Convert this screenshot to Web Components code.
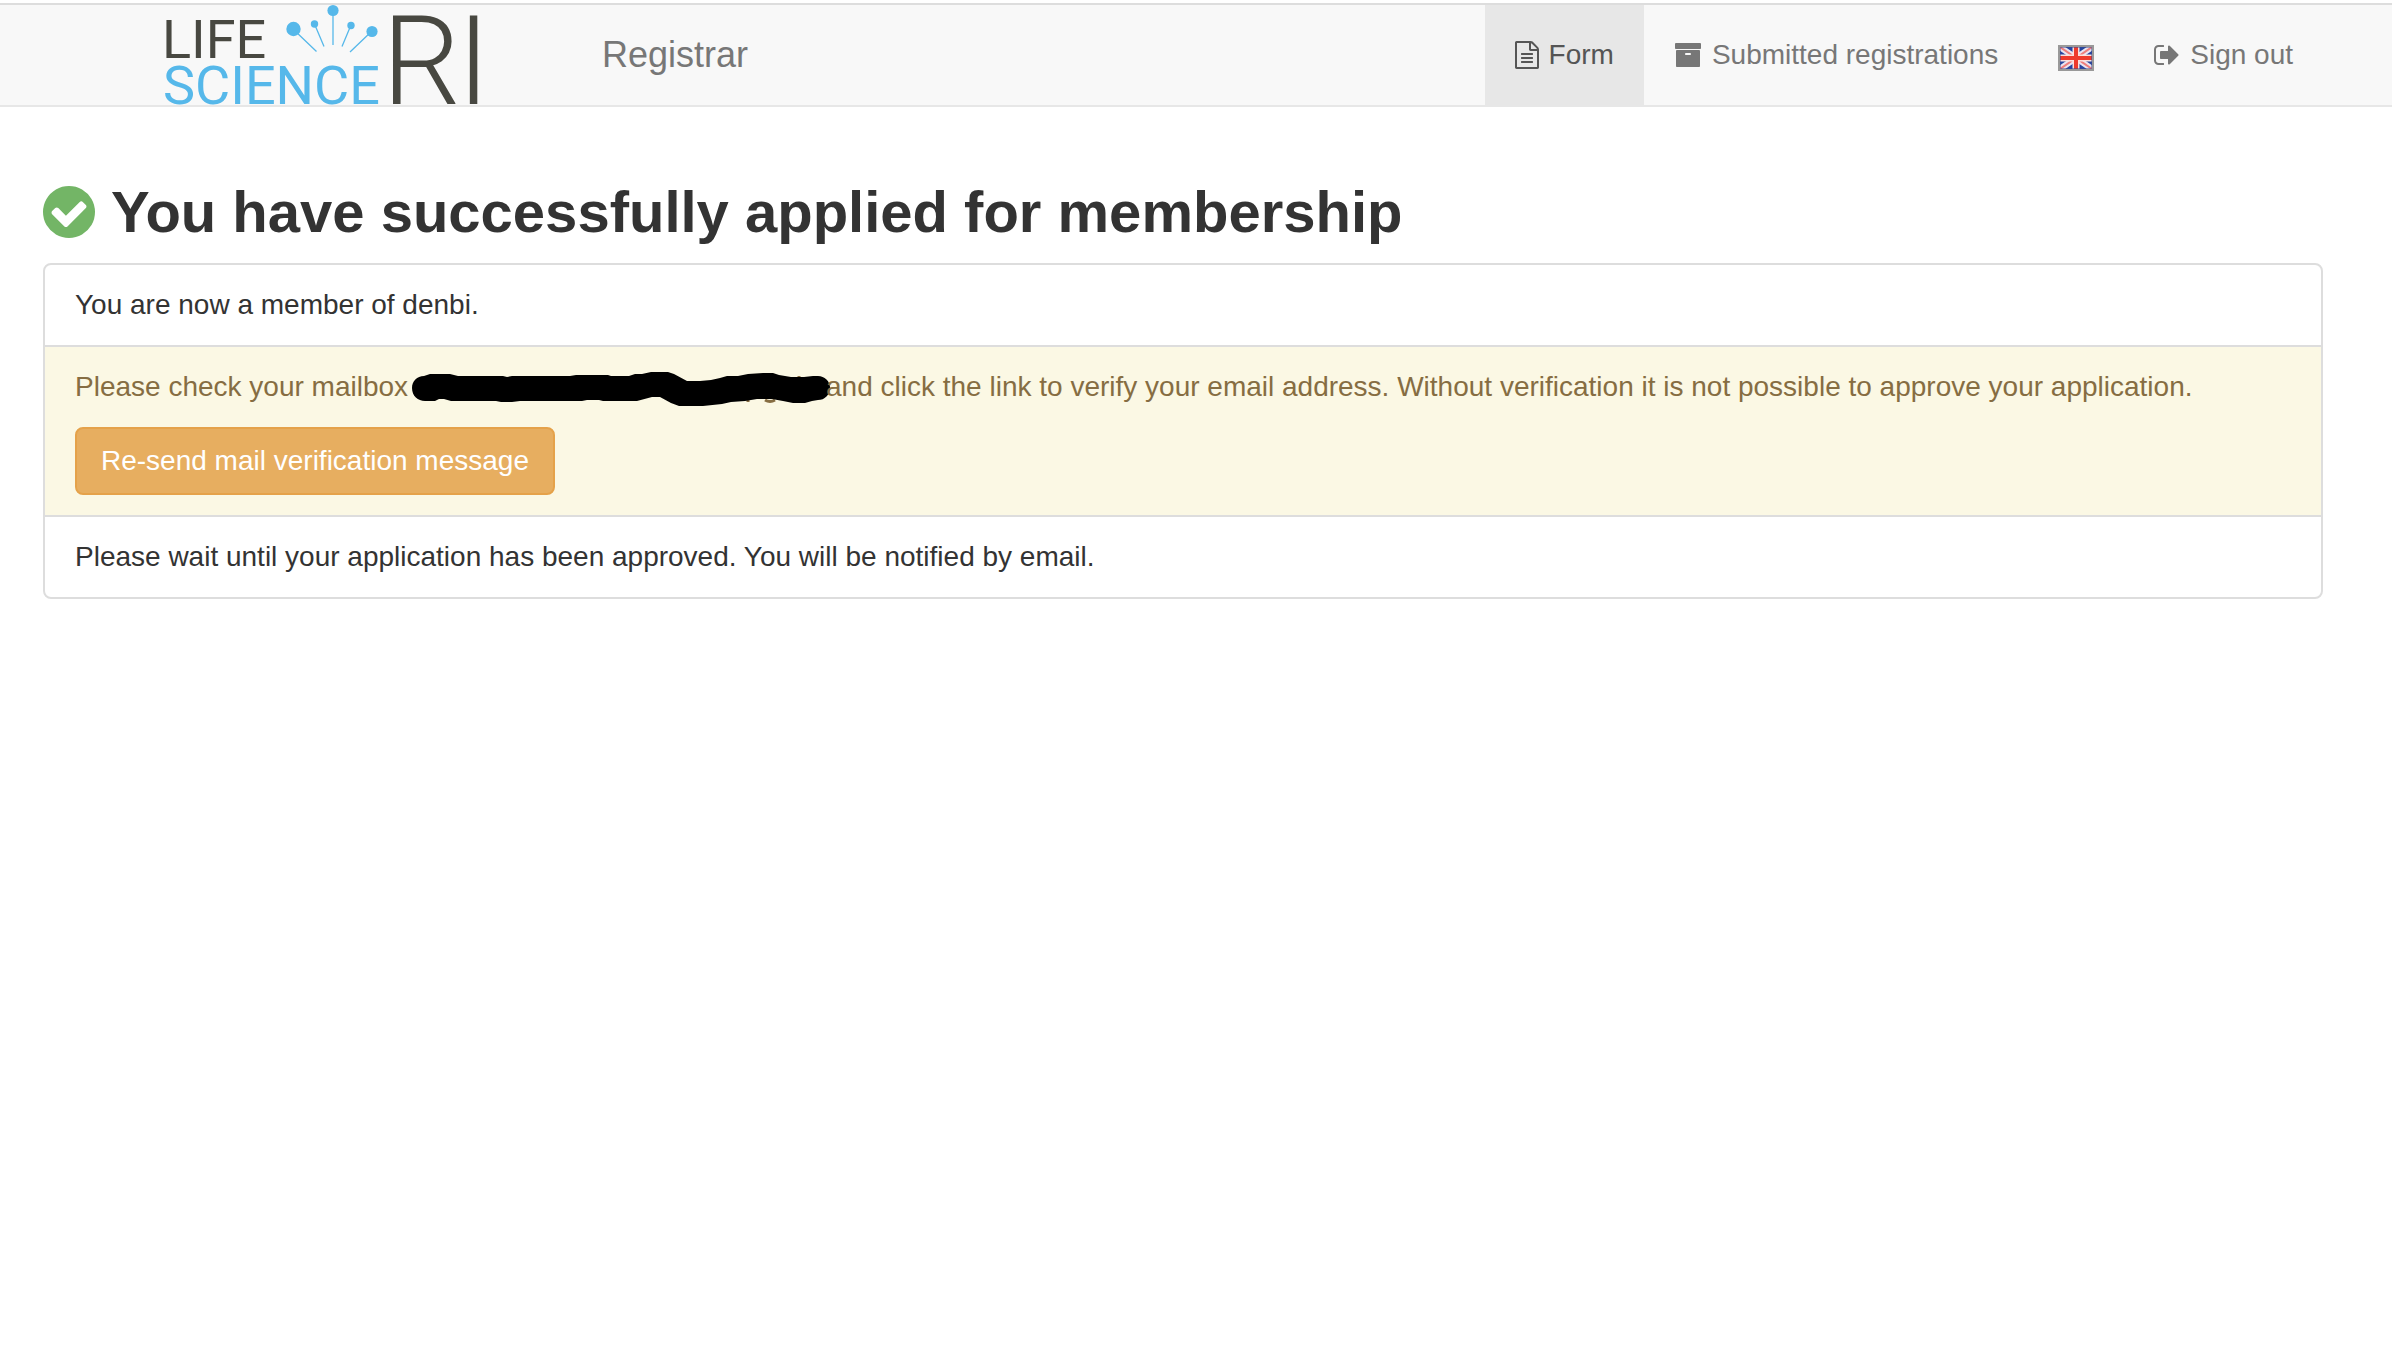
<!DOCTYPE html>
<html lang="en">
<head>
<meta charset="utf-8">
<title>Registrar</title>
<style>
body { margin: 0; background: #fff; color: #333; font: 28px/40px "Liberation Sans", Arial, sans-serif; }
</style>
</head>
<body>
<registrar-app></registrar-app>
<script>
const define = (name, html) => customElements.define(name, class extends HTMLElement {
  constructor() {
    super();
    const t = document.createElement('template');
    t.innerHTML = html;
    this.attachShadow({ mode: 'open' }).append(t.content.cloneNode(true));
  }
});

const ICONS = {
  file: ['128 0 1536 1792', 24, 28, 'M1596 380q28 28 48 76t20 88v1152q0 40-28 68t-68 28h-1344q-40 0-68-28t-28-68v-1600q0-40 28-68t68-28h896q40 0 88 20t76 48zm-444-244v376h376q-10-29-22-41l-313-313q-12-12-41-22zm384 1528v-1024h-416q-40 0-68-28t-28-68v-416h-768v1536h1280zm-1024-864q0-14 9-23t23-9h704q14 0 23 9t9 23v64q0 14-9 23t-23 9h-704q-14 0-23-9t-9-23v-64zm736 224q14 0 23 9t9 23v64q0 14-9 23t-23 9h-704q-14 0-23-9t-9-23v-64q0-14 9-23t23-9h704zm0 256q14 0 23 9t9 23v64q0 14-9 23t-23 9h-704q-14 0-23-9t-9-23v-64q0-14 9-23t23-9h704z'],
  archive: ['0 0 1792 1792', 28, 28, 'M1088 832q0-26-19-45t-45-19h-256q-26 0-45 19t-19 45 19 45 45 19h256q26 0 45-19t19-45zm576-192v960q0 26-19 45t-45 19h-1408q-26 0-45-19t-19-45v-960q0-26 19-45t45-19h1408q26 0 45 19t19 45zm64-448v256q0 26-19 45t-45 19h-1536q-26 0-45-19t-19-45v-256q0-26 19-45t45-19h1536q26 0 45 19t19 45z'],
  signout: ['64 0 1664 1792', 26, 28, 'M704 1440q0 4 1 20t.5 26.5-3 23.5-10 19.5-20.5 6.5h-320q-119 0-203.5-84.5t-84.5-203.5v-704q0-119 84.5-203.5t203.5-84.5h320q13 0 22.5 9.5t9.5 22.5q0 4 1 20t.5 26.5-3 23.5-10 19.5-20.5 6.5h-320q-66 0-113 47t-47 113v704q0 66 47 113t113 47h312l11.5 1 11.5 3 8 5.5 7 9 2 13.5zm928-544q0 26-19 45l-544 544q-19 19-45 19t-45-19-19-45v-288h-448q-26 0-45-19t-19-45v-384q0-26 19-45t45-19h448v-288q0-26 19-45t45-19 45 19l544 544q19 19 19 45z'],
  check: ['128 128 1536 1536', 52, 52, 'M1412 734q0-28-18-46l-91-90q-19-19-45-19t-45 19l-408 407-226-226q-19-19-45-19t-45 19l-91 90q-18 18-18 46 0 27 18 45l362 362q19 19 45 19 27 0 46-19l543-543q18-18 18-45zm252 162q0 209-103 385.5t-279.5 279.5-385.5 103-385.5-103-279.5-279.5-103-385.5 103-385.5 279.5-279.5 385.5-103 385.5 103 279.5 279.5 103 385.5z']
};

customElements.define('app-icon', class extends HTMLElement {
  constructor() { super(); this.attachShadow({ mode: 'open' }); }
  connectedCallback() {
    const [box, w, h, d] = ICONS[this.getAttribute('name')];
    this.shadowRoot.innerHTML = `<style>:host{display:block;flex:none}svg{display:block}</style>
      <svg viewBox="${box}" width="${w}" height="${h}" fill="currentColor" aria-hidden="true"><path d="${d}"/></svg>`;
  }
});

define('flag-icon', `<style>:host{display:block;margin-top:6px}svg{display:block}</style>
<svg width="36" height="26" viewBox="0 0 36 26" role="img" aria-label="English">
  <rect width="36" height="26" fill="#999"/>
  <svg x="2" y="2" width="32" height="22" viewBox="0 0 32 22">
    <rect width="32" height="22" fill="#2545a0"/>
    <path d="M0 0L32 22M32 0L0 22" stroke="#e9e4f0" stroke-width="6"/>
    <path d="M0 0L32 22M32 0L0 22" stroke="#ee7d7b" stroke-width="2"/>
    <path d="M16 0V22M0 11H32" stroke="#fbe0dc" stroke-width="7"/>
    <path d="M16 0V22M0 11H32" stroke="#ee3a2c" stroke-width="4"/>
    <rect width="32" height="22" fill="none" stroke="#3a4a90" stroke-opacity=".5" stroke-width="2"/>
  </svg>
</svg>`);

define('brand-logo', `<style>:host{display:block;flex:none}svg{display:block;overflow:visible;font-family:Roboto,"Liberation Sans",sans-serif}</style>
<svg width="320" height="100" viewBox="164 5 320 100" role="img" aria-label="Life Science RI">
  <g fill="#484841">
    <text x="162" y="58" font-size="54">LIFE</text>
    <text y="104" font-size="124" font-weight="300"><tspan x="382">R</tspan><tspan x="457">I</tspan></text>
  </g>
  <text x="163" y="104" font-size="54" fill="#56b8ea">SCIENCE</text>
  <g fill="#56b8ea" stroke="none">
    <circle cx="293.500" cy="29" r="7.200"/><circle cx="314.500" cy="24" r="3.700"/><circle cx="333" cy="10.500" r="5.600"/><circle cx="351" cy="25.500" r="3.700"/><circle cx="372" cy="31.500" r="5.600"/>
  </g>
  <path d="M294 30L316.500 51.500M314.500 24L324 46.500M333 10V45M351 25L342 46.500M372 31L350 52" stroke="#56b8ea" stroke-width="1.300" fill="none"/>
</svg>`);

define('nav-item', `<style>
:host{display:block}
a{display:flex;align-items:center;gap:10px;height:40px;padding:30px;color:#777;text-decoration:none;white-space:nowrap}
:host([active]) a{background:#e7e7e7;color:#555}
</style><a href="#"><slot name="icon"></slot><slot></slot></a>`);

define('nav-bar', `<style>
:host{display:block;margin-top:3px;border-top:2px solid #ddd;border-bottom:2px solid #e7e7e7;background:#f8f8f8}
header,nav{display:flex}
header{padding:0 69px 0 164px}
.logo{display:block}
.title{margin-left:118px;padding:30px 0;color:#777;font-size:36px;text-decoration:none}
nav{margin-left:auto}
</style>
<header>
  <a class="logo" href="#" aria-label="Home"><brand-logo></brand-logo></a>
  <a class="title" href="#">Registrar</a>
  <nav>
    <nav-item active><app-icon slot="icon" name="file"></app-icon>Form</nav-item>
    <nav-item><app-icon slot="icon" name="archive"></app-icon>Submitted registrations</nav-item>
    <nav-item><flag-icon slot="icon"></flag-icon></nav-item>
    <nav-item><app-icon slot="icon" name="signout"></app-icon>Sign out</nav-item>
  </nav>
</header>`);

define('page-title', `<style>
:host{display:block}
h2{display:flex;align-items:center;gap:16px;margin:0 0 18px;font-size:58px;line-height:66px;font-weight:700}
app-icon{color:#73b566}
</style><h2><app-icon name="check"></app-icon><span><slot></slot></span></h2>`);

define('list-group', `<style>:host{display:block;border:2px solid #ddd;border-radius:8px;overflow:hidden}</style><slot></slot>`);
define('list-item', `<style>
:host{display:block;padding:20px 30px;border-top:2px solid #ddd}
:host(:first-child){border-top:0}
:host([warning]){background:#fbf8e4;color:#866d42}
</style><slot></slot>`);

define('redacted-text', `<style>:host{display:inline-block;vertical-align:top;margin:0 -4px 0 4px}svg{display:block}</style>
<svg width="418" height="40" viewBox="412 367 418 40" aria-hidden="true">
  <path d="M748 397v5M765 400q5 3 10 0M799 379v-3" stroke="#866d42" stroke-width="3" fill="none"/>
  <path d="M412 388C412 381 417 376 424 376L430 374H450L458 376H503L507 377L512 376H570L576 375H608L611 376H629L635 374L642 374L651 372H668L674 374L687 381H700L711 380L720 378L727 376H738L748 374L763 373H773L779 375L791 377H804L813 376H818A12 12 0 0 1 818 400L812 401L805 403H793L783 401L772 399H757L745 401L731 402L722 404L703 406H679L671 403L660 397H652L637 401H603L599 400H587L582 401H520L512 402H501L496 401H451L444 399H439L435 401H425C418 401 412 396 412 388Z"/>
</svg>`);

define('warning-button', `<style>
:host{display:block;margin-top:20px}
button{display:block;padding:12px 24px;border:2px solid #e5a24a;border-radius:8px;background:#e7ae60;color:#fff;font:inherit}
</style><button type="button"><slot></slot></button>`);

define('registrar-app', `<style>
:host{display:block}
main{padding:72px 69px 0 43px}
</style>
<nav-bar></nav-bar>
<main>
  <page-title>You have successfully applied for membership</page-title>
  <list-group>
    <list-item>You are now a member of denbi.</list-item>
    <list-item warning>Please check your mailbox<redacted-text></redacted-text>and click the link to verify your email address. Without verification it is not possible to approve your application.<warning-button>Re-send mail verification message</warning-button></list-item>
    <list-item>Please wait until your application has been approved. You will be notified by email.</list-item>
  </list-group>
</main>`);
</script>
</body>
</html>
